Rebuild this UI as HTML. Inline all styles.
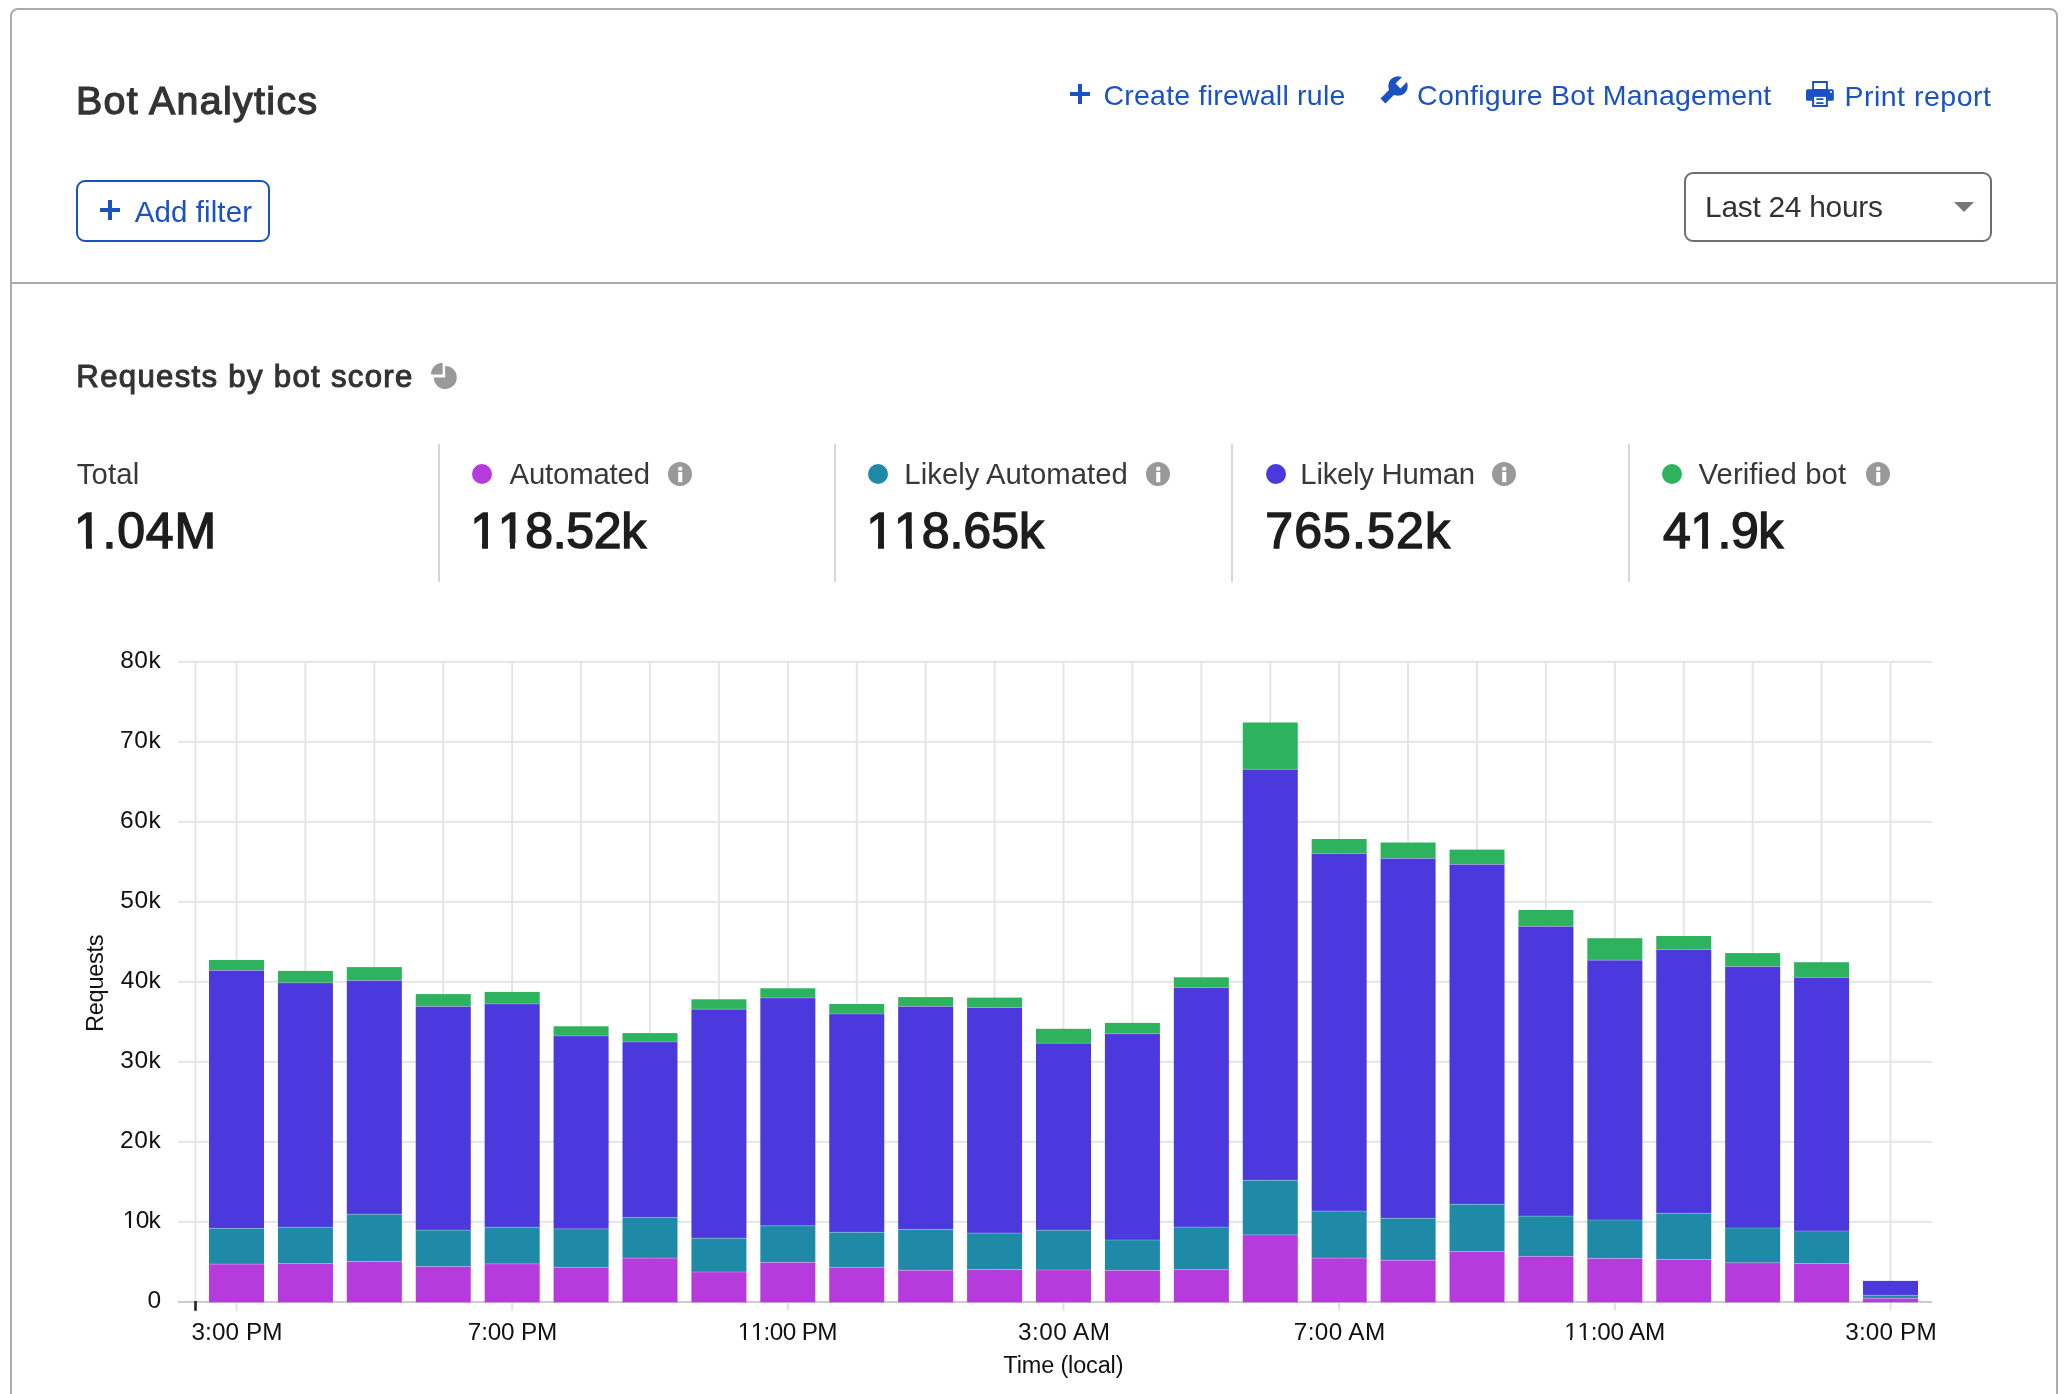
<!DOCTYPE html>
<html><head><meta charset="utf-8"><style>
html,body{margin:0;padding:0;background:#fff;}
body{width:2070px;height:1394px;position:relative;overflow:hidden;font-family:"Liberation Sans",sans-serif;}
.t{position:absolute;white-space:nowrap;}
.one{position:relative}
.one::before,.one::after{content:"";position:absolute;background:#fff;bottom:calc(0.212em - var(--sw)/2 - 0.7px);height:calc(0.0747em + var(--sw) + 1.4px)}
.one::before{left:calc(0.0762em - var(--sw)/2 - 0.9px);width:calc(0.1753em + 0.9px)}
.one::after{left:calc(0.3398em + var(--sw)/2);width:calc(0.1675em + 0.9px)}
#root{position:absolute;left:0;top:0;width:2070px;height:1394px;will-change:transform;}
</style></head><body><div id="root">
<div style="position:absolute;left:10px;top:8px;width:2044px;height:1500px;border:2px solid #ababab;border-radius:8px;background:#fff"></div>
<div style="position:absolute;left:12px;top:282px;width:2044px;height:2px;background:#ababab"></div>
<div class="t" style="left:75.98px;top:80.83px;font-size:39.3px;line-height:39.3px;font-weight:400;letter-spacing:1.340px;color:#333333;--sw:1.25px;-webkit-text-stroke:1.25px #333333;">Bot Analytics</div>
<div class="t" style="left:1103.48px;top:81.37px;font-size:28.5px;line-height:28.5px;font-weight:400;letter-spacing:0.224px;color:#1a52c4;--sw:0px;">Create firewall rule</div>
<div class="t" style="left:1417.08px;top:81.47px;font-size:28.5px;line-height:28.5px;font-weight:400;letter-spacing:0.246px;color:#1a52c4;--sw:0px;">Configure Bot Management</div>
<div class="t" style="left:1844.42px;top:81.87px;font-size:28.5px;line-height:28.5px;font-weight:400;letter-spacing:0.508px;color:#1a52c4;--sw:0px;">Print report</div>
<div style="position:absolute;left:1070px;top:92px;width:20px;height:4px;background:#1a52c4"></div><div style="position:absolute;left:1078px;top:84px;width:4px;height:20px;background:#1a52c4"></div>
<svg style="position:absolute;left:1374px;top:70px" width="40" height="40" viewBox="0 0 40 40"><g transform="rotate(-45 24 16)" fill="#1a52c4"><circle cx="24" cy="16" r="9.8"/><rect x="2.7" y="12.5" width="21.3" height="7"/><rect x="24" y="12.6" width="12" height="6.8" fill="#fff"/></g></svg>
<svg style="position:absolute;left:1802px;top:77px" width="36" height="34" viewBox="0 0 36 34">
<rect x="11.1" y="5" width="13.8" height="8" fill="none" stroke="#1a52c4" stroke-width="2"/>
<rect x="4" y="12.2" width="27.8" height="11.6" rx="1.6" fill="#1a52c4"/>
<rect x="11.1" y="18.9" width="13.8" height="10.05" fill="#fff" stroke="#1a52c4" stroke-width="2"/>
<rect x="14.1" y="21.2" width="7.6" height="1.7" rx="0.8" fill="#1a52c4"/>
<rect x="14.1" y="25.2" width="7.6" height="1.8" rx="0.8" fill="#1a52c4"/>
<rect x="28" y="14" width="1.9" height="1.9" fill="#dfe8ff"/>
</svg>
<div style="position:absolute;left:76px;top:180px;width:190px;height:58px;border:2px solid #1a52c4;border-radius:9px"></div>
<div style="position:absolute;left:100px;top:208px;width:20px;height:4px;background:#1a52c4"></div><div style="position:absolute;left:108px;top:200px;width:4px;height:20px;background:#1a52c4"></div>
<div class="t" style="left:134.75px;top:197.12px;font-size:29.5px;line-height:29.5px;font-weight:400;letter-spacing:0.090px;color:#1a52c4;--sw:0px;">Add filter</div>
<div style="position:absolute;left:1684px;top:172px;width:304px;height:66px;border:2px solid #6f6f6f;border-radius:9px"></div>
<div class="t" style="left:1705.11px;top:192.18px;font-size:29.9px;line-height:29.9px;font-weight:400;letter-spacing:-0.280px;color:#333333;--sw:0px;">Last 24 hours</div>
<svg style="position:absolute;left:1954px;top:202px" width="20" height="10" viewBox="0 0 20 10"><path d="M0 0H20L10 10Z" fill="#777"/></svg>
<div class="t" style="left:76.33px;top:361.18px;font-size:31.2px;line-height:31.2px;font-weight:400;letter-spacing:1.286px;color:#333333;--sw:1.05px;-webkit-text-stroke:1.05px #333333;">Requests by bot score</div>
<svg style="position:absolute;left:425px;top:357px" width="40" height="40" viewBox="0 0 40 40"><path d="M17.6 5.7 A11.9 11.9 0 0 0 6 17.6 H17.6 Z" fill="#999"/><path d="M20.2 9 V20.5 H8.8 A11.5 11.5 0 1 0 20.2 9 Z" fill="#999"/></svg>
<div class="t" style="left:76.81px;top:459.29px;font-size:29.3px;line-height:29.3px;font-weight:400;letter-spacing:0.117px;color:#383838;--sw:0px;">Total</div>
<div class="t" style="left:73.88px;top:505.97px;font-size:50px;line-height:50px;font-weight:400;letter-spacing:0.825px;color:#1d1d1d;--sw:1.45px;-webkit-text-stroke:1.45px #1d1d1d;"><span class="one">1</span>.04M</div>
<div style="position:absolute;left:472px;top:463.8px;width:20px;height:20px;border-radius:50%;background:#b53bdd"></div>
<div class="t" style="left:509.55px;top:458.79px;font-size:29.3px;line-height:29.3px;font-weight:400;letter-spacing:-0.152px;color:#383838;--sw:0px;">Automated</div>
<svg style="position:absolute;left:668.1px;top:461.8px" width="24" height="24" viewBox="0 0 24 24"><circle cx="12" cy="12" r="12" fill="#999"/><rect x="10.2" y="4.8" width="4.1" height="3.9" rx="1.2" fill="#fff"/><rect x="10.2" y="10" width="4.1" height="10.2" fill="#fff"/></svg>
<div class="t" style="left:470.18px;top:506.17px;font-size:50px;line-height:50px;font-weight:400;letter-spacing:-0.317px;color:#1d1d1d;--sw:1.45px;-webkit-text-stroke:1.45px #1d1d1d;"><span class="one">1</span><span class="one">1</span>8.52k</div>
<div style="position:absolute;left:868px;top:463.8px;width:20px;height:20px;border-radius:50%;background:#1f8aa8"></div>
<div class="t" style="left:904.36px;top:458.79px;font-size:29.3px;line-height:29.3px;font-weight:400;letter-spacing:0.022px;color:#383838;--sw:0px;">Likely Automated</div>
<svg style="position:absolute;left:1146.2px;top:461.8px" width="24" height="24" viewBox="0 0 24 24"><circle cx="12" cy="12" r="12" fill="#999"/><rect x="10.2" y="4.8" width="4.1" height="3.9" rx="1.2" fill="#fff"/><rect x="10.2" y="10" width="4.1" height="10.2" fill="#fff"/></svg>
<div class="t" style="left:866.18px;top:506.17px;font-size:50px;line-height:50px;font-weight:400;letter-spacing:-0.033px;color:#1d1d1d;--sw:1.45px;-webkit-text-stroke:1.45px #1d1d1d;"><span class="one">1</span><span class="one">1</span>8.65k</div>
<div style="position:absolute;left:1266px;top:463.8px;width:20px;height:20px;border-radius:50%;background:#4b39dd"></div>
<div class="t" style="left:1300.36px;top:458.79px;font-size:29.3px;line-height:29.3px;font-weight:400;letter-spacing:-0.255px;color:#383838;--sw:0px;">Likely Human</div>
<svg style="position:absolute;left:1491.8px;top:461.8px" width="24" height="24" viewBox="0 0 24 24"><circle cx="12" cy="12" r="12" fill="#999"/><rect x="10.2" y="4.8" width="4.1" height="3.9" rx="1.2" fill="#fff"/><rect x="10.2" y="10" width="4.1" height="10.2" fill="#fff"/></svg>
<div class="t" style="left:1265.22px;top:506.17px;font-size:50px;line-height:50px;font-weight:400;letter-spacing:1.142px;color:#1d1d1d;--sw:1.45px;-webkit-text-stroke:1.45px #1d1d1d;">765.52k</div>
<div style="position:absolute;left:1662px;top:463.8px;width:20px;height:20px;border-radius:50%;background:#2db35d"></div>
<div class="t" style="left:1698.55px;top:458.79px;font-size:29.3px;line-height:29.3px;font-weight:400;letter-spacing:0.081px;color:#383838;--sw:0px;">Verified bot</div>
<svg style="position:absolute;left:1866.1px;top:461.8px" width="24" height="24" viewBox="0 0 24 24"><circle cx="12" cy="12" r="12" fill="#999"/><rect x="10.2" y="4.8" width="4.1" height="3.9" rx="1.2" fill="#fff"/><rect x="10.2" y="10" width="4.1" height="10.2" fill="#fff"/></svg>
<div class="t" style="left:1662.92px;top:506.17px;font-size:50px;line-height:50px;font-weight:400;letter-spacing:-0.500px;color:#1d1d1d;--sw:1.45px;-webkit-text-stroke:1.45px #1d1d1d;">4<span class="one">1</span>.9k</div>
<div style="position:absolute;left:438px;top:444px;width:2px;height:138px;background:#d6d6d6"></div>
<div style="position:absolute;left:834px;top:444px;width:2px;height:138px;background:#d6d6d6"></div>
<div style="position:absolute;left:1231px;top:444px;width:2px;height:138px;background:#d6d6d6"></div>
<div style="position:absolute;left:1628px;top:444px;width:2px;height:138px;background:#d6d6d6"></div>
<svg style="position:absolute;left:0;top:0" width="2070" height="1394" viewBox="0 0 2070 1394">
<rect x="178" y="660.8" width="1754" height="2" fill="#e5e5e5"/>
<rect x="178" y="740.8" width="1754" height="2" fill="#e5e5e5"/>
<rect x="178" y="820.8" width="1754" height="2" fill="#e5e5e5"/>
<rect x="178" y="900.8" width="1754" height="2" fill="#e5e5e5"/>
<rect x="178" y="980.8" width="1754" height="2" fill="#e5e5e5"/>
<rect x="178" y="1060.8" width="1754" height="2" fill="#e5e5e5"/>
<rect x="178" y="1140.8" width="1754" height="2" fill="#e5e5e5"/>
<rect x="178" y="1220.8" width="1754" height="2" fill="#e5e5e5"/>
<rect x="194.50" y="661.8" width="2" height="640" fill="#e5e5e5"/>
<rect x="235.50" y="661.8" width="2" height="640" fill="#e5e5e5"/>
<rect x="304.42" y="661.8" width="2" height="640" fill="#e5e5e5"/>
<rect x="373.33" y="661.8" width="2" height="640" fill="#e5e5e5"/>
<rect x="442.25" y="661.8" width="2" height="640" fill="#e5e5e5"/>
<rect x="511.17" y="661.8" width="2" height="640" fill="#e5e5e5"/>
<rect x="580.09" y="661.8" width="2" height="640" fill="#e5e5e5"/>
<rect x="649.00" y="661.8" width="2" height="640" fill="#e5e5e5"/>
<rect x="717.92" y="661.8" width="2" height="640" fill="#e5e5e5"/>
<rect x="786.84" y="661.8" width="2" height="640" fill="#e5e5e5"/>
<rect x="855.75" y="661.8" width="2" height="640" fill="#e5e5e5"/>
<rect x="924.67" y="661.8" width="2" height="640" fill="#e5e5e5"/>
<rect x="993.59" y="661.8" width="2" height="640" fill="#e5e5e5"/>
<rect x="1062.50" y="661.8" width="2" height="640" fill="#e5e5e5"/>
<rect x="1131.42" y="661.8" width="2" height="640" fill="#e5e5e5"/>
<rect x="1200.34" y="661.8" width="2" height="640" fill="#e5e5e5"/>
<rect x="1269.26" y="661.8" width="2" height="640" fill="#e5e5e5"/>
<rect x="1338.17" y="661.8" width="2" height="640" fill="#e5e5e5"/>
<rect x="1407.09" y="661.8" width="2" height="640" fill="#e5e5e5"/>
<rect x="1476.01" y="661.8" width="2" height="640" fill="#e5e5e5"/>
<rect x="1544.92" y="661.8" width="2" height="640" fill="#e5e5e5"/>
<rect x="1613.84" y="661.8" width="2" height="640" fill="#e5e5e5"/>
<rect x="1682.76" y="661.8" width="2" height="640" fill="#e5e5e5"/>
<rect x="1751.67" y="661.8" width="2" height="640" fill="#e5e5e5"/>
<rect x="1820.59" y="661.8" width="2" height="640" fill="#e5e5e5"/>
<rect x="1889.51" y="661.8" width="2" height="640" fill="#e5e5e5"/>
<rect x="178" y="1301.0" width="1754" height="2" fill="#cccccc"/>
<rect x="209.00" y="960" width="55" height="10.40" fill="#2db35d"/>
<rect x="209.00" y="970.4" width="55" height="258.00" fill="#4b39dd"/>
<rect x="209.00" y="1228.4" width="55" height="35.70" fill="#1f8aa8"/>
<rect x="209.00" y="1264.1" width="55" height="38.20" fill="#b53bdd"/>
<rect x="209.00" y="969.90" width="55" height="1" fill="#fff" fill-opacity="0.25"/>
<rect x="209.00" y="1227.90" width="55" height="1" fill="#fff" fill-opacity="0.25"/>
<rect x="209.00" y="1263.60" width="55" height="1" fill="#fff" fill-opacity="0.25"/>
<rect x="277.92" y="970.9" width="55" height="11.90" fill="#2db35d"/>
<rect x="277.92" y="982.8" width="55" height="244.40" fill="#4b39dd"/>
<rect x="277.92" y="1227.2" width="55" height="36.40" fill="#1f8aa8"/>
<rect x="277.92" y="1263.6" width="55" height="38.70" fill="#b53bdd"/>
<rect x="277.92" y="982.30" width="55" height="1" fill="#fff" fill-opacity="0.25"/>
<rect x="277.92" y="1226.70" width="55" height="1" fill="#fff" fill-opacity="0.25"/>
<rect x="277.92" y="1263.10" width="55" height="1" fill="#fff" fill-opacity="0.25"/>
<rect x="346.83" y="967.1" width="55" height="13.50" fill="#2db35d"/>
<rect x="346.83" y="980.6" width="55" height="233.60" fill="#4b39dd"/>
<rect x="346.83" y="1214.2" width="55" height="47.30" fill="#1f8aa8"/>
<rect x="346.83" y="1261.5" width="55" height="40.80" fill="#b53bdd"/>
<rect x="346.83" y="980.10" width="55" height="1" fill="#fff" fill-opacity="0.25"/>
<rect x="346.83" y="1213.70" width="55" height="1" fill="#fff" fill-opacity="0.25"/>
<rect x="346.83" y="1261.00" width="55" height="1" fill="#fff" fill-opacity="0.25"/>
<rect x="415.75" y="994.1" width="55" height="12.40" fill="#2db35d"/>
<rect x="415.75" y="1006.5" width="55" height="223.60" fill="#4b39dd"/>
<rect x="415.75" y="1230.1" width="55" height="36.50" fill="#1f8aa8"/>
<rect x="415.75" y="1266.6" width="55" height="35.70" fill="#b53bdd"/>
<rect x="415.75" y="1006.00" width="55" height="1" fill="#fff" fill-opacity="0.25"/>
<rect x="415.75" y="1229.60" width="55" height="1" fill="#fff" fill-opacity="0.25"/>
<rect x="415.75" y="1266.10" width="55" height="1" fill="#fff" fill-opacity="0.25"/>
<rect x="484.67" y="991.9" width="55" height="12.00" fill="#2db35d"/>
<rect x="484.67" y="1003.9" width="55" height="223.30" fill="#4b39dd"/>
<rect x="484.67" y="1227.2" width="55" height="36.70" fill="#1f8aa8"/>
<rect x="484.67" y="1263.9" width="55" height="38.40" fill="#b53bdd"/>
<rect x="484.67" y="1003.40" width="55" height="1" fill="#fff" fill-opacity="0.25"/>
<rect x="484.67" y="1226.70" width="55" height="1" fill="#fff" fill-opacity="0.25"/>
<rect x="484.67" y="1263.40" width="55" height="1" fill="#fff" fill-opacity="0.25"/>
<rect x="553.59" y="1026.3" width="55" height="9.60" fill="#2db35d"/>
<rect x="553.59" y="1035.9" width="55" height="193.00" fill="#4b39dd"/>
<rect x="553.59" y="1228.9" width="55" height="38.40" fill="#1f8aa8"/>
<rect x="553.59" y="1267.3" width="55" height="35.00" fill="#b53bdd"/>
<rect x="553.59" y="1035.40" width="55" height="1" fill="#fff" fill-opacity="0.25"/>
<rect x="553.59" y="1228.40" width="55" height="1" fill="#fff" fill-opacity="0.25"/>
<rect x="553.59" y="1266.80" width="55" height="1" fill="#fff" fill-opacity="0.25"/>
<rect x="622.50" y="1033.1" width="55" height="8.80" fill="#2db35d"/>
<rect x="622.50" y="1041.9" width="55" height="175.50" fill="#4b39dd"/>
<rect x="622.50" y="1217.4" width="55" height="40.70" fill="#1f8aa8"/>
<rect x="622.50" y="1258.1" width="55" height="44.20" fill="#b53bdd"/>
<rect x="622.50" y="1041.40" width="55" height="1" fill="#fff" fill-opacity="0.25"/>
<rect x="622.50" y="1216.90" width="55" height="1" fill="#fff" fill-opacity="0.25"/>
<rect x="622.50" y="1257.60" width="55" height="1" fill="#fff" fill-opacity="0.25"/>
<rect x="691.42" y="999.3" width="55" height="9.90" fill="#2db35d"/>
<rect x="691.42" y="1009.2" width="55" height="229.00" fill="#4b39dd"/>
<rect x="691.42" y="1238.2" width="55" height="33.80" fill="#1f8aa8"/>
<rect x="691.42" y="1272" width="55" height="30.30" fill="#b53bdd"/>
<rect x="691.42" y="1008.70" width="55" height="1" fill="#fff" fill-opacity="0.25"/>
<rect x="691.42" y="1237.70" width="55" height="1" fill="#fff" fill-opacity="0.25"/>
<rect x="691.42" y="1271.50" width="55" height="1" fill="#fff" fill-opacity="0.25"/>
<rect x="760.34" y="988.3" width="55" height="9.60" fill="#2db35d"/>
<rect x="760.34" y="997.9" width="55" height="227.90" fill="#4b39dd"/>
<rect x="760.34" y="1225.8" width="55" height="36.60" fill="#1f8aa8"/>
<rect x="760.34" y="1262.4" width="55" height="39.90" fill="#b53bdd"/>
<rect x="760.34" y="997.40" width="55" height="1" fill="#fff" fill-opacity="0.25"/>
<rect x="760.34" y="1225.30" width="55" height="1" fill="#fff" fill-opacity="0.25"/>
<rect x="760.34" y="1261.90" width="55" height="1" fill="#fff" fill-opacity="0.25"/>
<rect x="829.25" y="1004" width="55" height="10.00" fill="#2db35d"/>
<rect x="829.25" y="1014" width="55" height="218.30" fill="#4b39dd"/>
<rect x="829.25" y="1232.3" width="55" height="35.00" fill="#1f8aa8"/>
<rect x="829.25" y="1267.3" width="55" height="35.00" fill="#b53bdd"/>
<rect x="829.25" y="1013.50" width="55" height="1" fill="#fff" fill-opacity="0.25"/>
<rect x="829.25" y="1231.80" width="55" height="1" fill="#fff" fill-opacity="0.25"/>
<rect x="829.25" y="1266.80" width="55" height="1" fill="#fff" fill-opacity="0.25"/>
<rect x="898.17" y="997.1" width="55" height="9.30" fill="#2db35d"/>
<rect x="898.17" y="1006.4" width="55" height="223.00" fill="#4b39dd"/>
<rect x="898.17" y="1229.4" width="55" height="40.90" fill="#1f8aa8"/>
<rect x="898.17" y="1270.3" width="55" height="32.00" fill="#b53bdd"/>
<rect x="898.17" y="1005.90" width="55" height="1" fill="#fff" fill-opacity="0.25"/>
<rect x="898.17" y="1228.90" width="55" height="1" fill="#fff" fill-opacity="0.25"/>
<rect x="898.17" y="1269.80" width="55" height="1" fill="#fff" fill-opacity="0.25"/>
<rect x="967.09" y="997.6" width="55" height="9.90" fill="#2db35d"/>
<rect x="967.09" y="1007.5" width="55" height="225.60" fill="#4b39dd"/>
<rect x="967.09" y="1233.1" width="55" height="36.40" fill="#1f8aa8"/>
<rect x="967.09" y="1269.5" width="55" height="32.80" fill="#b53bdd"/>
<rect x="967.09" y="1007.00" width="55" height="1" fill="#fff" fill-opacity="0.25"/>
<rect x="967.09" y="1232.60" width="55" height="1" fill="#fff" fill-opacity="0.25"/>
<rect x="967.09" y="1269.00" width="55" height="1" fill="#fff" fill-opacity="0.25"/>
<rect x="1036.00" y="1028.8" width="55" height="14.40" fill="#2db35d"/>
<rect x="1036.00" y="1043.2" width="55" height="187.00" fill="#4b39dd"/>
<rect x="1036.00" y="1230.2" width="55" height="39.80" fill="#1f8aa8"/>
<rect x="1036.00" y="1270" width="55" height="32.30" fill="#b53bdd"/>
<rect x="1036.00" y="1042.70" width="55" height="1" fill="#fff" fill-opacity="0.25"/>
<rect x="1036.00" y="1229.70" width="55" height="1" fill="#fff" fill-opacity="0.25"/>
<rect x="1036.00" y="1269.50" width="55" height="1" fill="#fff" fill-opacity="0.25"/>
<rect x="1104.92" y="1022.9" width="55" height="10.80" fill="#2db35d"/>
<rect x="1104.92" y="1033.7" width="55" height="206.30" fill="#4b39dd"/>
<rect x="1104.92" y="1240" width="55" height="30.40" fill="#1f8aa8"/>
<rect x="1104.92" y="1270.4" width="55" height="31.90" fill="#b53bdd"/>
<rect x="1104.92" y="1033.20" width="55" height="1" fill="#fff" fill-opacity="0.25"/>
<rect x="1104.92" y="1239.50" width="55" height="1" fill="#fff" fill-opacity="0.25"/>
<rect x="1104.92" y="1269.90" width="55" height="1" fill="#fff" fill-opacity="0.25"/>
<rect x="1173.84" y="977.3" width="55" height="10.30" fill="#2db35d"/>
<rect x="1173.84" y="987.6" width="55" height="239.50" fill="#4b39dd"/>
<rect x="1173.84" y="1227.1" width="55" height="42.50" fill="#1f8aa8"/>
<rect x="1173.84" y="1269.6" width="55" height="32.70" fill="#b53bdd"/>
<rect x="1173.84" y="987.10" width="55" height="1" fill="#fff" fill-opacity="0.25"/>
<rect x="1173.84" y="1226.60" width="55" height="1" fill="#fff" fill-opacity="0.25"/>
<rect x="1173.84" y="1269.10" width="55" height="1" fill="#fff" fill-opacity="0.25"/>
<rect x="1242.76" y="722.5" width="55" height="46.80" fill="#2db35d"/>
<rect x="1242.76" y="769.3" width="55" height="411.00" fill="#4b39dd"/>
<rect x="1242.76" y="1180.3" width="55" height="54.60" fill="#1f8aa8"/>
<rect x="1242.76" y="1234.9" width="55" height="67.40" fill="#b53bdd"/>
<rect x="1242.76" y="768.80" width="55" height="1" fill="#fff" fill-opacity="0.25"/>
<rect x="1242.76" y="1179.80" width="55" height="1" fill="#fff" fill-opacity="0.25"/>
<rect x="1242.76" y="1234.40" width="55" height="1" fill="#fff" fill-opacity="0.25"/>
<rect x="1311.67" y="839" width="55" height="14.50" fill="#2db35d"/>
<rect x="1311.67" y="853.5" width="55" height="357.60" fill="#4b39dd"/>
<rect x="1311.67" y="1211.1" width="55" height="47.00" fill="#1f8aa8"/>
<rect x="1311.67" y="1258.1" width="55" height="44.20" fill="#b53bdd"/>
<rect x="1311.67" y="853.00" width="55" height="1" fill="#fff" fill-opacity="0.25"/>
<rect x="1311.67" y="1210.60" width="55" height="1" fill="#fff" fill-opacity="0.25"/>
<rect x="1311.67" y="1257.60" width="55" height="1" fill="#fff" fill-opacity="0.25"/>
<rect x="1380.59" y="842.5" width="55" height="15.90" fill="#2db35d"/>
<rect x="1380.59" y="858.4" width="55" height="359.90" fill="#4b39dd"/>
<rect x="1380.59" y="1218.3" width="55" height="42.00" fill="#1f8aa8"/>
<rect x="1380.59" y="1260.3" width="55" height="42.00" fill="#b53bdd"/>
<rect x="1380.59" y="857.90" width="55" height="1" fill="#fff" fill-opacity="0.25"/>
<rect x="1380.59" y="1217.80" width="55" height="1" fill="#fff" fill-opacity="0.25"/>
<rect x="1380.59" y="1259.80" width="55" height="1" fill="#fff" fill-opacity="0.25"/>
<rect x="1449.51" y="849.6" width="55" height="14.80" fill="#2db35d"/>
<rect x="1449.51" y="864.4" width="55" height="339.90" fill="#4b39dd"/>
<rect x="1449.51" y="1204.3" width="55" height="47.30" fill="#1f8aa8"/>
<rect x="1449.51" y="1251.6" width="55" height="50.70" fill="#b53bdd"/>
<rect x="1449.51" y="863.90" width="55" height="1" fill="#fff" fill-opacity="0.25"/>
<rect x="1449.51" y="1203.80" width="55" height="1" fill="#fff" fill-opacity="0.25"/>
<rect x="1449.51" y="1251.10" width="55" height="1" fill="#fff" fill-opacity="0.25"/>
<rect x="1518.42" y="910" width="55" height="16.40" fill="#2db35d"/>
<rect x="1518.42" y="926.4" width="55" height="289.70" fill="#4b39dd"/>
<rect x="1518.42" y="1216.1" width="55" height="40.30" fill="#1f8aa8"/>
<rect x="1518.42" y="1256.4" width="55" height="45.90" fill="#b53bdd"/>
<rect x="1518.42" y="925.90" width="55" height="1" fill="#fff" fill-opacity="0.25"/>
<rect x="1518.42" y="1215.60" width="55" height="1" fill="#fff" fill-opacity="0.25"/>
<rect x="1518.42" y="1255.90" width="55" height="1" fill="#fff" fill-opacity="0.25"/>
<rect x="1587.34" y="938.2" width="55" height="22.00" fill="#2db35d"/>
<rect x="1587.34" y="960.2" width="55" height="259.80" fill="#4b39dd"/>
<rect x="1587.34" y="1220" width="55" height="38.40" fill="#1f8aa8"/>
<rect x="1587.34" y="1258.4" width="55" height="43.90" fill="#b53bdd"/>
<rect x="1587.34" y="959.70" width="55" height="1" fill="#fff" fill-opacity="0.25"/>
<rect x="1587.34" y="1219.50" width="55" height="1" fill="#fff" fill-opacity="0.25"/>
<rect x="1587.34" y="1257.90" width="55" height="1" fill="#fff" fill-opacity="0.25"/>
<rect x="1656.26" y="936" width="55" height="13.50" fill="#2db35d"/>
<rect x="1656.26" y="949.5" width="55" height="263.80" fill="#4b39dd"/>
<rect x="1656.26" y="1213.3" width="55" height="46.10" fill="#1f8aa8"/>
<rect x="1656.26" y="1259.4" width="55" height="42.90" fill="#b53bdd"/>
<rect x="1656.26" y="949.00" width="55" height="1" fill="#fff" fill-opacity="0.25"/>
<rect x="1656.26" y="1212.80" width="55" height="1" fill="#fff" fill-opacity="0.25"/>
<rect x="1656.26" y="1258.90" width="55" height="1" fill="#fff" fill-opacity="0.25"/>
<rect x="1725.17" y="953.1" width="55" height="13.50" fill="#2db35d"/>
<rect x="1725.17" y="966.6" width="55" height="261.40" fill="#4b39dd"/>
<rect x="1725.17" y="1228" width="55" height="34.80" fill="#1f8aa8"/>
<rect x="1725.17" y="1262.8" width="55" height="39.50" fill="#b53bdd"/>
<rect x="1725.17" y="966.10" width="55" height="1" fill="#fff" fill-opacity="0.25"/>
<rect x="1725.17" y="1227.50" width="55" height="1" fill="#fff" fill-opacity="0.25"/>
<rect x="1725.17" y="1262.30" width="55" height="1" fill="#fff" fill-opacity="0.25"/>
<rect x="1794.09" y="962.2" width="55" height="15.20" fill="#2db35d"/>
<rect x="1794.09" y="977.4" width="55" height="253.60" fill="#4b39dd"/>
<rect x="1794.09" y="1231" width="55" height="32.50" fill="#1f8aa8"/>
<rect x="1794.09" y="1263.5" width="55" height="38.80" fill="#b53bdd"/>
<rect x="1794.09" y="976.90" width="55" height="1" fill="#fff" fill-opacity="0.25"/>
<rect x="1794.09" y="1230.50" width="55" height="1" fill="#fff" fill-opacity="0.25"/>
<rect x="1794.09" y="1263.00" width="55" height="1" fill="#fff" fill-opacity="0.25"/>
<rect x="1863.01" y="1280.9" width="55" height="14.40" fill="#4b39dd"/>
<rect x="1863.01" y="1295.3" width="55" height="3.00" fill="#1f8aa8"/>
<rect x="1863.01" y="1298.3" width="55" height="4.00" fill="#b53bdd"/>
<rect x="1863.01" y="1294.80" width="55" height="1" fill="#fff" fill-opacity="0.25"/>
<rect x="1863.01" y="1297.80" width="55" height="1" fill="#fff" fill-opacity="0.25"/>
<rect x="194.2" y="1301" width="2.6" height="9.8" fill="#222"/>
<rect x="235.50" y="1303" width="2" height="7.5" fill="#e0e0e0"/>
<rect x="511.17" y="1303" width="2" height="7.5" fill="#e0e0e0"/>
<rect x="786.84" y="1303" width="2" height="7.5" fill="#e0e0e0"/>
<rect x="1062.50" y="1303" width="2" height="7.5" fill="#e0e0e0"/>
<rect x="1338.17" y="1303" width="2" height="7.5" fill="#e0e0e0"/>
<rect x="1613.84" y="1303" width="2" height="7.5" fill="#e0e0e0"/>
<rect x="1889.51" y="1303" width="2" height="7.5" fill="#e0e0e0"/>
</svg>
<div class="t" style="left:120.20px;top:647.86px;font-size:24.5px;line-height:24.5px;font-weight:400;letter-spacing:0.517px;color:#111111;--sw:0px;">80k</div>
<div class="t" style="left:120.08px;top:727.86px;font-size:24.5px;line-height:24.5px;font-weight:400;letter-spacing:0.579px;color:#111111;--sw:0px;">70k</div>
<div class="t" style="left:120.08px;top:807.86px;font-size:24.5px;line-height:24.5px;font-weight:400;letter-spacing:0.579px;color:#111111;--sw:0px;">60k</div>
<div class="t" style="left:120.32px;top:887.86px;font-size:24.5px;line-height:24.5px;font-weight:400;letter-spacing:0.456px;color:#111111;--sw:0px;">50k</div>
<div class="t" style="left:120.81px;top:967.86px;font-size:24.5px;line-height:24.5px;font-weight:400;letter-spacing:0.211px;color:#111111;--sw:0px;">40k</div>
<div class="t" style="left:120.32px;top:1047.86px;font-size:24.5px;line-height:24.5px;font-weight:400;letter-spacing:0.456px;color:#111111;--sw:0px;">30k</div>
<div class="t" style="left:120.08px;top:1127.86px;font-size:24.5px;line-height:24.5px;font-weight:400;letter-spacing:0.579px;color:#111111;--sw:0px;">20k</div>
<div class="t" style="left:122.77px;top:1207.86px;font-size:24.5px;line-height:24.5px;font-weight:400;letter-spacing:-0.770px;color:#111111;--sw:0px;"><span class="one">1</span>0k</div>
<div class="t" style="left:147.52px;top:1287.86px;font-size:24.5px;line-height:24.5px;font-weight:400;letter-spacing:0.000px;color:#111111;--sw:0px;">0</div>
<div class="t" style="left:191.43px;top:1320.23px;font-size:24.3px;line-height:24.3px;font-weight:400;letter-spacing:0.100px;color:#111111;--sw:0px;">3:00 PM</div>
<div class="t" style="left:467.85px;top:1320.23px;font-size:24.3px;line-height:24.3px;font-weight:400;letter-spacing:-0.193px;color:#111111;--sw:0px;">7:00 PM</div>
<div class="t" style="left:737.73px;top:1320.23px;font-size:24.3px;line-height:24.3px;font-weight:400;letter-spacing:-0.593px;color:#111111;--sw:0px;"><span class="one">1</span><span class="one">1</span>:00 PM</div>
<div class="t" style="left:1018.03px;top:1320.23px;font-size:24.3px;line-height:24.3px;font-weight:400;letter-spacing:0.456px;color:#111111;--sw:0px;">3:00 AM</div>
<div class="t" style="left:1293.86px;top:1320.23px;font-size:24.3px;line-height:24.3px;font-weight:400;letter-spacing:0.363px;color:#111111;--sw:0px;">7:00 AM</div>
<div class="t" style="left:1564.18px;top:1320.23px;font-size:24.3px;line-height:24.3px;font-weight:400;letter-spacing:-0.245px;color:#111111;--sw:0px;"><span class="one">1</span><span class="one">1</span>:00 AM</div>
<div class="t" style="left:1845.29px;top:1320.23px;font-size:24.3px;line-height:24.3px;font-weight:400;letter-spacing:0.150px;color:#111111;--sw:0px;">3:00 PM</div>
<div class="t" style="left:1003.33px;top:1353.70px;font-size:23.5px;line-height:23.5px;font-weight:400;letter-spacing:-0.152px;color:#111111;--sw:0px;">Time (local)</div>
<div class="t" style="left:84.02px;top:1031.69px;font-size:23.6px;line-height:23.6px;font-weight:400;letter-spacing:-0.299px;color:#111111;transform-origin:0 0;transform:rotate(-90deg);">Requests</div>
</div></body></html>
